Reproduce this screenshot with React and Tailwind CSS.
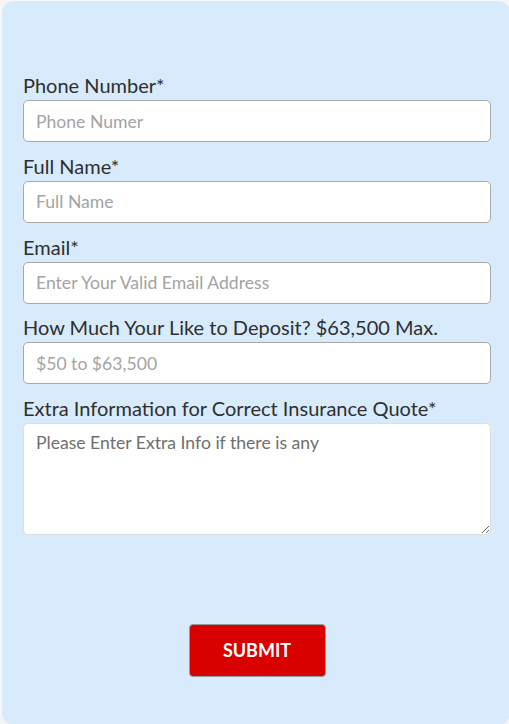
const FIELDS = [
  { label: "Phone Number*", placeholder: "Phone Numer", type: "tel" },
  { label: "Full Name*", placeholder: "Full Name", type: "text" },
  { label: "Email*", placeholder: "Enter Your Valid Email Address", type: "email" },
  { label: "How Much Your Like to Deposit? $63,500 Max.", placeholder: "$50 to $63,500", type: "text" },
];

export default function App() {
  return (
    <div className="min-h-screen bg-[#f4f6f8] pt-[1px] pl-[2px] font-['Lato','Liberation_Sans',sans-serif]">
      <form className="w-[508px] h-[724px] rounded-[12px] bg-[#d7ebfd] pt-[75px] pl-[21px] pr-[17px]">
        <div className="flex flex-col gap-[14.75px]">
          {FIELDS.map(({ label, placeholder, type }) => (
            <div key={label}>
              <label className="block mb-[5px] text-[20px] leading-[19px] text-[#2f2f2f]">{label}</label>
              <input
                type={type}
                placeholder={placeholder}
                className="block w-[468px] h-[42px] rounded-[5px] border border-[#a9a9a9] bg-white px-[12px] text-[17.6px] text-[#333] placeholder:text-[#a3a3a3] outline-none"
              />
            </div>
          ))}
          <div>
            <label className="block mb-[5px] text-[20px] leading-[19px] text-[#2f2f2f]">
              Extra Information for Correct Insurance Quote*
            </label>
            <textarea
              placeholder="Please Enter Extra Info if there is any"
              className="block w-[468px] h-[112px] rounded-[5px] border border-[#dedede] bg-white px-[12px] py-[7px] text-[17.6px] leading-[24px] text-[#333] placeholder:text-[#6f6f6f] outline-none"
            />
          </div>
        </div>
        <div className="mt-[89px] flex justify-center pr-[2px]">
          <button
            type="button"
            className="w-[137px] h-[53px] rounded-[4px] border border-[#9a9a9a] bg-[#d90000] text-[18px] font-bold text-white"
          >
            SUBMIT
          </button>
        </div>
      </form>
    </div>
  );
}
